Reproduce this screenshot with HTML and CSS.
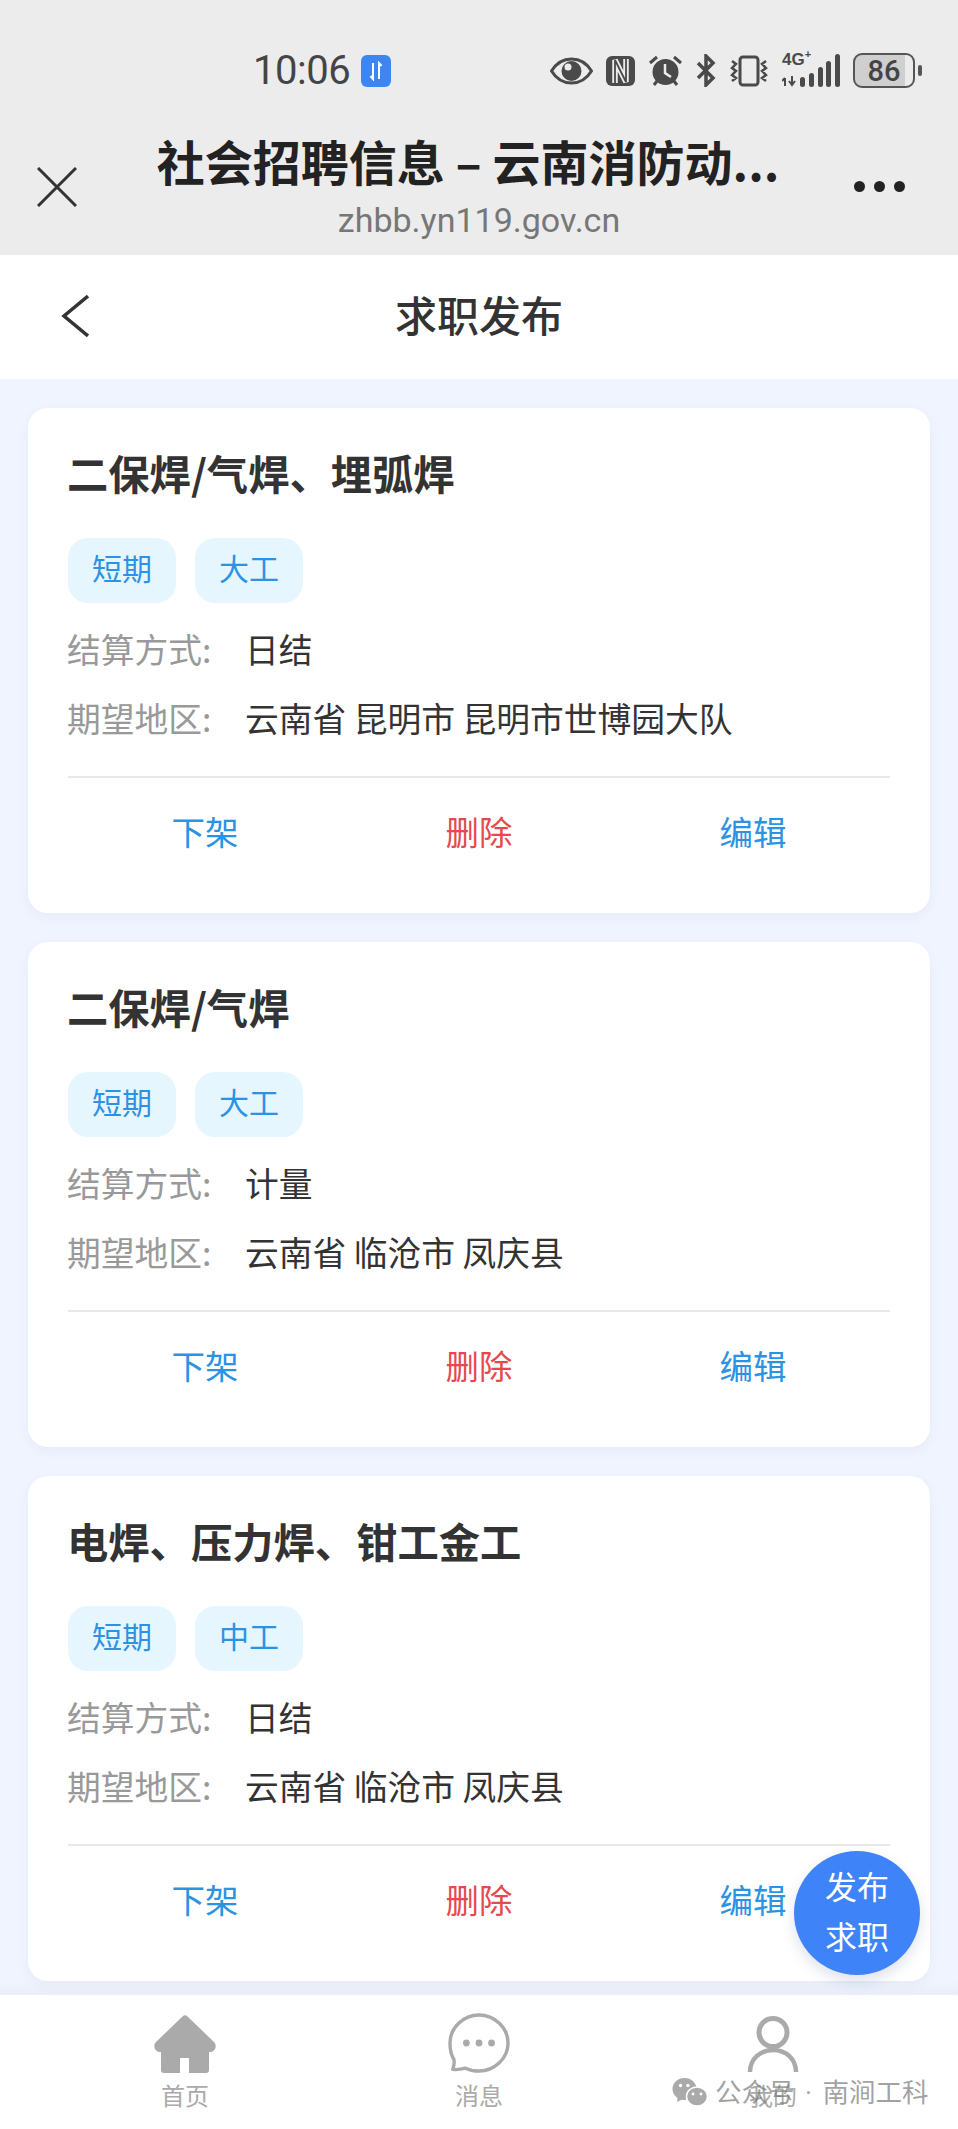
FILE: index.html
```html
<!DOCTYPE html>
<html lang="zh-CN">
<head>
  <meta charset="UTF-8" />
  <meta name="viewport" content="width=device-width, initial-scale=1.0" />
  <title>求职发布</title>
  <link rel="stylesheet" href="styles.css">
</head>
<body>
  <div class="top-gray">
    <div class="status-bar">
      <span class="time">10:06</span>
      <span class="net-badge">
        <svg width="14" height="20" viewBox="0 0 14 20"><path d="M4 2v16l-2.500-3M10 18V2l2.500 3" fill="none" stroke="#fff" stroke-width="2"/></svg>
      </span>
      <div class="status-icons">
        <svg width="43" height="28" viewBox="0 0 43 28"><path d="M1.500 14C7 5 14 2 21.500 2S36 5 41.500 14C36 23 29 26 21.500 26S7 23 1.500 14Z" fill="none" stroke="#4a4a4a" stroke-width="3"/><circle cx="21.500" cy="14" r="10" fill="#4a4a4a"/><circle cx="18" cy="10" r="3.500" fill="#ececec"/></svg>
        <svg width="29" height="30" viewBox="0 0 29 30"><rect width="29" height="30" rx="6" fill="#4a4a4a"/><path d="M9 27V4l11 22V3" fill="none" stroke="#ececec" stroke-width="5.500"/><path d="M9 27V4l11 22V3" fill="none" stroke="#4a4a4a" stroke-width="1.800"/></svg>
        <svg width="35" height="32" viewBox="0 0 35 32"><circle cx="17.500" cy="17" r="13" fill="#4a4a4a"/><path d="M17 9v9l6 4" fill="none" stroke="#ececec" stroke-width="2.500"/><path d="M2 8l7-6M33 8l-7-6M6 30l3-4M29 30l-3-4" stroke="#4a4a4a" stroke-width="3"/></svg>
        <svg width="20" height="33" viewBox="0 0 20 33"><path d="M2 9l15 15-7 7V2l7 7L2 24" fill="none" stroke="#4a4a4a" stroke-width="3.500"/></svg>
        <svg width="40" height="32" viewBox="0 0 40 32"><rect x="11" y="2" width="18" height="28" rx="3" fill="none" stroke="#4a4a4a" stroke-width="3"/><path d="M3 6l4 3-4 4 4 3-4 4 4 3-4 3M37 6l-4 3 4 4-4 3 4 4-4 3 4 3" fill="none" stroke="#4a4a4a" stroke-width="2.500"/></svg>
        <div class="signal">
          <span class="net-type">4G<sup>+</sup></span>
          <svg width="58" height="33" viewBox="0 0 58 33"><path d="M3 24v8M10 22v9M0 27l3-3M7 27l3 4 3-4" fill="none" stroke="#4a4a4a" stroke-width="2"/><rect x="18" y="23" width="5" height="10" rx="2.500" fill="#4a4a4a"/><rect x="27" y="19" width="5" height="14" rx="2.500" fill="#4a4a4a"/><rect x="36" y="13" width="5" height="20" rx="2.500" fill="#4a4a4a"/><rect x="44" y="7" width="5" height="26" rx="2.500" fill="#4a4a4a"/><rect x="53" y="0" width="5" height="33" rx="2.500" fill="#4a4a4a"/></svg>
        </div>
        <div class="battery">
          <div class="battery-body"><span>86</span></div>
          <i class="battery-cap"></i>
        </div>
      </div>
    </div>
    <div class="browser-bar">
      <svg class="close-icon" width="40" height="40" viewBox="0 0 40 40"><path d="M1 1l38 38M39 1L1 39" fill="none" stroke="#333" stroke-width="3"/></svg>
      <div class="page-info">
        <div class="page-title">社会招聘信息 – 云南消防动...</div>
        <div class="page-url">zhbb.yn119.gov.cn</div>
      </div>
      <div class="more-dots"><i></i><i></i><i></i></div>
    </div>
  </div>

  <header class="app-header">
    <svg class="back-icon" width="28" height="44" viewBox="0 0 28 44"><path d="M27 2L3 22l24 20" fill="none" stroke="#333" stroke-width="3.500"/></svg>
    <h1>求职发布</h1>
  </header>

  <main class="list">
    <section class="card">
      <h2>二保焊/气焊、埋弧焊</h2>
      <div class="tags"><span>短期</span><span>大工</span></div>
      <div class="row"><label>结算方式:</label><span>日结</span></div>
      <div class="row"><label>期望地区:</label><span>云南省 昆明市 昆明市世博园大队</span></div>
      <div class="actions"><a>下架</a><a class="danger">删除</a><a>编辑</a></div>
    </section>
    <section class="card">
      <h2>二保焊/气焊</h2>
      <div class="tags"><span>短期</span><span>大工</span></div>
      <div class="row"><label>结算方式:</label><span>计量</span></div>
      <div class="row"><label>期望地区:</label><span>云南省 临沧市 凤庆县</span></div>
      <div class="actions"><a>下架</a><a class="danger">删除</a><a>编辑</a></div>
    </section>
    <section class="card">
      <h2>电焊、压力焊、钳工金工</h2>
      <div class="tags"><span>短期</span><span>中工</span></div>
      <div class="row"><label>结算方式:</label><span>日结</span></div>
      <div class="row"><label>期望地区:</label><span>云南省 临沧市 凤庆县</span></div>
      <div class="actions"><a>下架</a><a class="danger">删除</a><a>编辑</a></div>
    </section>
  </main>

  <nav class="tabbar">
    <a>
      <svg width="62" height="60" viewBox="0 -2 62 60"><path d="M29 1c1-1 3-1 4 0L60 27c3 3 2 9-3 10h-2V55c0 2-1 3-3 3H35V43H26V58H10c-2 0-3-1-3-3V37H5c-5-1-6-7-3-10Z" fill="#aaa"/></svg>
      <span>首页</span>
    </a>
    <a>
      <svg width="64" height="62" viewBox="0 0 64 62"><path d="M32 2c16 0 30 13 30 29S48 60 32 60c-5 0-10-1-14-3-4 1-10 2-13 1 1-3 2-6 1-10C3 43 2 37 2 31 2 15 16 2 32 2Z" fill="none" stroke="#aaa" stroke-width="3.500"/><circle cx="19" cy="31" r="3.500" fill="#aaa"/><circle cx="32" cy="31" r="3.500" fill="#aaa"/><circle cx="45" cy="31" r="3.500" fill="#aaa"/></svg>
      <span>消息</span>
    </a>
    <a>
      <svg width="54" height="60" viewBox="0 0 54 60"><circle cx="27" cy="19.500" r="14" fill="none" stroke="#aaa" stroke-width="5"/><path d="M4 59C4 46 14 37 27 37S50 46 50 59" fill="none" stroke="#aaa" stroke-width="4.500"/></svg>
      <span>我的</span>
    </a>
  </nav>

  <button class="fab">发布<br>求职</button>

  <div class="watermark">
    <svg width="36" height="28" viewBox="0 0 36 28"><ellipse cx="12.500" cy="11" rx="12" ry="11" fill="#aaa"/><path d="M6 18l-1 6 6-3Z" fill="#aaa"/><ellipse cx="25" cy="18.500" rx="10.500" ry="9.500" fill="#aaa" stroke="#fff" stroke-width="1.500"/><circle cx="8.500" cy="7.500" r="1.700" fill="#fff"/><circle cx="16" cy="7.500" r="1.700" fill="#fff"/><circle cx="21" cy="16" r="1.400" fill="#fff"/><circle cx="29" cy="16" r="1.400" fill="#fff"/></svg>
    <span>公众号<span class="dot"> · </span>南涧工科</span>
  </div>
</body>
</html>
```

FILE: styles.css
```css
:root {
  --blue: #2b92e4;
  --red: #e5484d;
  --text: #333;
  --muted: #999;
}

* {
  box-sizing: border-box;
}

body {
  font-family: 'Noto Sans CJK SC', 'Noto Sans', sans-serif;
  margin: 0;
  width: 958px;
  height: 2129px;
  position: relative;
  overflow: hidden;
  display: flex;
  flex-direction: column;
  background: #eff4fe;
  color: var(--text);
}

.top-gray {
  height: 255px;
  background: #ececec;
  padding-top: 53px;
}

.status-bar {
  display: flex;
  align-items: center;
  height: 35px;
  padding-left: 253px;
  padding-right: 36px;
}

.time {
  font-family: Roboto, sans-serif;
  font-size: 40px;
  color: #444;
  letter-spacing: -0.5px;
  line-height: 35px;
}

.net-badge {
  width: 30px;
  height: 32px;
  margin-left: 11px;
  background: #3b86f2;
  border-radius: 6px;
  display: flex;
  align-items: center;
  justify-content: center;
}

.status-icons {
  display: flex;
  align-items: center;
  gap: 13px;
  margin-left: auto;
}

.signal {
  position: relative;
  width: 58px;
  height: 33px;
}

.net-type {
  position: absolute;
  left: 0;
  top: -3px;
  font-family: 'Liberation Sans', sans-serif;
  font-size: 17px;
  font-weight: 700;
  line-height: 18px;
  color: #4a4a4a;
}

.net-type sup {
  font-size: 11px;
  line-height: 0;
}

.battery {
  display: flex;
  align-items: center;
  gap: 3px;
}

.battery-body {
  width: 62px;
  height: 35px;
  border: 2px solid #555;
  border-radius: 9px;
  background: linear-gradient(to right, #cfcfcf 86%, #ececec 86%);
  display: flex;
  align-items: center;
  justify-content: center;
  font-family: Roboto, sans-serif;
  font-size: 29px;
  font-weight: 500;
  color: #444;
}

.battery-cap {
  width: 4px;
  height: 11px;
  background: #555;
  border-radius: 2px;
}

.browser-bar {
  display: flex;
  align-items: center;
  height: 167px;
  padding: 0 53px 0 37px;
}

.close-icon {
  margin-top: 30px;
  flex: none;
}

.page-info {
  flex: 1;
  text-align: center;
  padding-left: 5px;
}

.page-title {
  font-size: 48px;
  font-weight: 700;
  line-height: 60px;
  color: #222;
  margin-top: 30px;
  white-space: nowrap;
}

.page-url {
  font-family: Roboto, sans-serif;
  font-size: 34px;
  line-height: 48px;
  color: #777;
  margin-top: 6px;
  padding-left: 22px;
}

.more-dots {
  display: flex;
  gap: 9px;
  margin-top: 30px;
}

.more-dots i {
  width: 11px;
  height: 11px;
  border-radius: 50%;
  background: #222;
}

.app-header {
  height: 124px;
  background: #fff;
  display: flex;
  align-items: center;
  justify-content: center;
  position: relative;
}

.app-header h1 {
  margin: -8px 0 0;
  font-size: 42px;
  font-weight: 500;
  color: #333;
}

.back-icon {
  position: absolute;
  left: 61px;
  top: 39px;
}

.list {
  flex: 1;
  min-height: 0;
  overflow: hidden;
  padding: 29px 28px 0;
  display: flex;
  flex-direction: column;
  gap: 29px;
  box-shadow: inset 0 -14px 14px -10px rgba(0, 0, 60, 0.04);
}

.card {
  flex: none;
  height: 505px;
  background: #fff;
  border-radius: 20px;
  padding: 37px 40px 22px;
  box-shadow: 0 4px 12px rgba(60, 80, 140, 0.05);
}

.card h2 {
  margin: 0 0 0 -1px;
  font-size: 41.300px;
  font-weight: 700;
  line-height: 54px;
  color: #333;
}

.tags {
  display: flex;
  gap: 19px;
  margin-top: 39px;
  margin-bottom: 11px;
}

.tags span {
  width: 108px;
  height: 65px;
  border-radius: 20px;
  background: #e6f6ff;
  color: var(--blue);
  font-size: 30px;
  line-height: 58px;
  text-align: center;
}

.row {
  display: flex;
  font-size: 33.750px;
  line-height: 69px;
  color: var(--text);
}

.row label {
  width: 177px;
  flex: none;
  margin-left: -1px;
  margin-right: 1px;
  color: var(--muted);
}

.actions {
  display: grid;
  grid-template-columns: repeat(3, 1fr);
  margin-top: 24px;
  border-top: 2px solid #e8e8e8;
  height: 114px;
  line-height: 106px;
  font-size: 33.500px;
  text-align: center;
  color: var(--blue);
}

.actions .danger {
  color: var(--red);
}

.tabbar {
  height: 134px;
  background: #fff;
  display: grid;
  grid-template-columns: repeat(3, 294px);
  padding: 0 38px;
}

.tabbar a {
  display: flex;
  flex-direction: column;
  align-items: center;
  padding-top: 18px;
  color: #aaa;
  font-size: 24px;
  line-height: 34px;
}

.tabbar svg {
  display: block;
  height: 60px;
  margin-bottom: 5px;
}

.fab {
  position: absolute;
  right: 38px;
  bottom: 154px;
  width: 126px;
  height: 124px;
  border: none;
  border-radius: 50%;
  padding: 0 0 7px;
  background: #3f83f8;
  color: #fff;
  font-family: inherit;
  font-size: 32px;
  line-height: 50px;
  box-shadow: 0 6px 14px rgba(40, 60, 120, 0.15);
}

.watermark {
  position: absolute;
  left: 672px;
  top: 2076px;
  display: flex;
  align-items: center;
  gap: 7px;
  font-size: 26.500px;
  line-height: 30px;
  color: rgba(120, 120, 120, 0.7);
}

.watermark .dot {
  display: inline-block;
  width: 28px;
  text-align: center;
  font-family: Roboto, sans-serif;
}
```
